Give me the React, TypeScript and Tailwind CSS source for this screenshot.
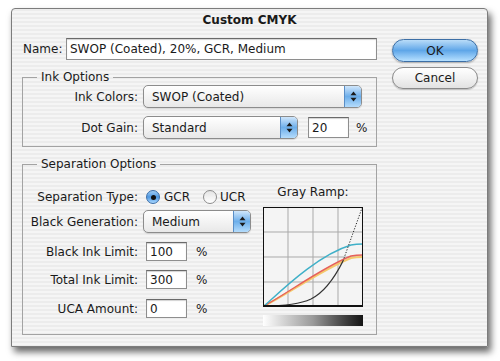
const pin =
  'bg-[repeating-linear-gradient(180deg,#ececec_0px,#ececec_2px,#f5f5f5_2px,#f5f5f5_4px)]';

function Arrows() {
  return (
    <svg width="7" height="11" viewBox="0 0 7 11">
      <path d="M3.5 0.5 L6.5 4.2 L0.5 4.2 Z" fill="#1a1a1a" />
      <path d="M0.5 6.8 L6.5 6.8 L3.5 10.5 Z" fill="#1a1a1a" />
    </svg>
  );
}

function Popup({ value, className }: { value: string; className: string }) {
  return (
    <div
      className={`flex h-[23px] items-stretch rounded-[5px] border border-[#8c8c8c] bg-linear-to-b from-white to-[#e8e8e8] shadow-[0_1px_1px_rgba(0,0,0,0.12)] ${className}`}
    >
      <span className="flex flex-1 items-center pl-[8px]">{value}</span>
      <span className="flex w-[17px] items-center justify-center rounded-r-[4px] border-l border-[#5a8ec6] bg-linear-to-b from-[#cfe6fb] via-[#6caeea] to-[#b4dcfc]">
        <Arrows />
      </span>
    </div>
  );
}

function Field({ value, className }: { value: string; className: string }) {
  return (
    <div
      className={`flex items-center border border-[#8e8e8e] border-t-[#6a6a6a] bg-white pl-[3px] shadow-[inset_0_1px_1px_rgba(0,0,0,0.18)] ${className}`}
    >
      {value}
    </div>
  );
}

function Radio({ on }: { on: boolean }) {
  if (on) {
    return (
      <span className="flex h-[14px] w-[14px] items-center justify-center rounded-full border border-[#3b6ea8] bg-linear-to-b from-[#9fcdf5] via-[#4d97e0] to-[#a9d8ff]">
        <span className="h-[5px] w-[5px] rounded-full bg-[#111]" />
      </span>
    );
  }
  return (
    <span className="h-[14px] w-[14px] rounded-full border border-[#8c8c8c] bg-linear-to-b from-[#e4e4e4] to-white" />
  );
}

function Row({ label, children }: { label: string; children: React.ReactNode }) {
  return (
    <div className="flex items-center">
      <span className="w-[115px] text-right">{label}</span>
      {children}
    </div>
  );
}

function GrayRamp() {
  return (
    <svg width="100" height="100" viewBox="0 0 100 100" className="block bg-[#f4f4f4]">
      {[25, 50, 75].map((v) => (
        <g key={v}>
          <line x1={v} y1="0" x2={v} y2="100" stroke="#a9a9a9" strokeWidth="1" />
          <line x1="0" y1={v} x2="100" y2={v} stroke="#a9a9a9" strokeWidth="1" />
        </g>
      ))}
      <path d="M1 99 C25 87 60 62 88 51 C93 50 96 50 100 50" fill="none" stroke="#f5c96c" strokeWidth="2" />
      <path d="M1 99 C25 86 60 60 88 49 C93 48 96 48 100 48" fill="none" stroke="#e6605a" strokeWidth="1.4" />
      <path d="M1 99 C20 82 55 48 88 38 C93 37 96 37 100 37" fill="none" stroke="#3fb0c8" strokeWidth="1.4" />
      <path d="M1 99 C20 99 35 98 48 92 C60 86 71 72 80 54" fill="none" stroke="#333" strokeWidth="1.3" />
      <path d="M80 54 L99 1" fill="none" stroke="#222" strokeWidth="1" strokeDasharray="1.2 1.6" />
      <rect x="0.5" y="0.5" width="99" height="99" fill="none" stroke="#111" strokeWidth="1" />
      <line x1="0" y1="99" x2="100" y2="99" stroke="#111" strokeWidth="2" />
    </svg>
  );
}

export default function App() {
  return (
    <div className="h-[361px] w-[500px] overflow-hidden bg-white pl-[11px] pt-[8px] font-['DejaVu_Sans',sans-serif] text-[12px] leading-[16px] text-[#1a1a1a]">
      <div
        className={`h-[339px] w-[477px] rounded-t-[4px] border border-[#7c7c7c] ${pin} shadow-[3px_5px_7px_rgba(0,0,0,0.6)]`}
      >
        <div className="flex h-[21px] items-center justify-center text-[12px] font-bold">
          Custom CMYK
        </div>

        <div className="flex pl-[10px] pt-[8px]">
          <div className="w-[355px]">
            <div className="flex h-[22px] items-center">
              <span className="pl-[1px]">Name:</span>
              <Field
                value="SWOP (Coated), 20%, GCR, Medium"
                className="ml-auto h-[22px] w-[311px]"
              />
            </div>

            <fieldset className="mt-[9px] border border-[#a3a3a3] pb-[7px]">
              <legend className="ml-[14px] px-[4px]">Ink Options</legend>
              <Row label="Ink Colors:">
                <Popup value="SWOP (Coated)" className="ml-[5px] w-[219px]" />
              </Row>
              <div className="mt-[8px]">
                <Row label="Dot Gain:">
                  <Popup value="Standard" className="ml-[5px] w-[155px]" />
                  <Field value="20" className="ml-[10px] h-[21px] w-[41px]" />
                  <span className="ml-[7px]">%</span>
                </Row>
              </div>
            </fieldset>

            <fieldset className="mt-[9px] border border-[#a3a3a3]">
              <legend className="ml-[14px] px-[4px]">Separation Options</legend>
              <div className="flex items-start">
                <div className="w-[240px] pb-[16px] pt-[15px]">
                  <div className="flex h-[20px] items-center">
                    <span className="w-[115px] text-right">Separation Type:</span>
                    <span className="ml-[8px] flex items-center gap-[4px]">
                      <Radio on />
                      GCR
                    </span>
                    <span className="ml-[13px] flex items-center gap-[3px]">
                      <Radio on={false} />
                      UCR
                    </span>
                  </div>
                  <div className="mt-[3px]">
                    <Row label="Black Generation:">
                      <Popup value="Medium" className="ml-[5px] w-[108px]" />
                    </Row>
                  </div>
                  <div className="mt-[9px]">
                    <Row label="Black Ink Limit:">
                      <Field value="100" className="ml-[8px] h-[19px] w-[41px]" />
                      <span className="ml-[9px]">%</span>
                    </Row>
                  </div>
                  <div className="mt-[9px]">
                    <Row label="Total Ink Limit:">
                      <Field value="300" className="ml-[8px] h-[19px] w-[41px]" />
                      <span className="ml-[9px]">%</span>
                    </Row>
                  </div>
                  <div className="mt-[10px]">
                    <Row label="UCA Amount:">
                      <Field value="0" className="ml-[8px] h-[19px] w-[41px]" />
                      <span className="ml-[9px]">%</span>
                    </Row>
                  </div>
                </div>

                <div className="w-[100px] pt-[12px]">
                  <div className="h-[16px] text-center">Gray Ramp:</div>
                  <div className="mt-[7px]">
                    <GrayRamp />
                  </div>
                  <div className="mt-[8px] h-[11px] bg-linear-to-r from-white via-[#9a9a9a] to-[#151515]" />
                </div>
              </div>
            </fieldset>
          </div>

          <div className="ml-[15px] flex w-[86px] flex-col gap-[5px] pt-[1px]">
            <button className="flex h-[23px] items-center justify-center rounded-full border border-[#3d6fa6] bg-linear-to-b from-[#b9dcf8] via-[#5ea6e8] to-[#b6e0ff] shadow-[0_1px_2px_rgba(0,0,0,0.3)]">
              OK
            </button>
            <button className="flex h-[22px] items-center justify-center rounded-full border border-[#8a8a8a] bg-linear-to-b from-white via-[#f2f2f2] to-[#e2e2e2] shadow-[0_1px_1px_rgba(0,0,0,0.2)]">
              Cancel
            </button>
          </div>
        </div>
      </div>
    </div>
  );
}
